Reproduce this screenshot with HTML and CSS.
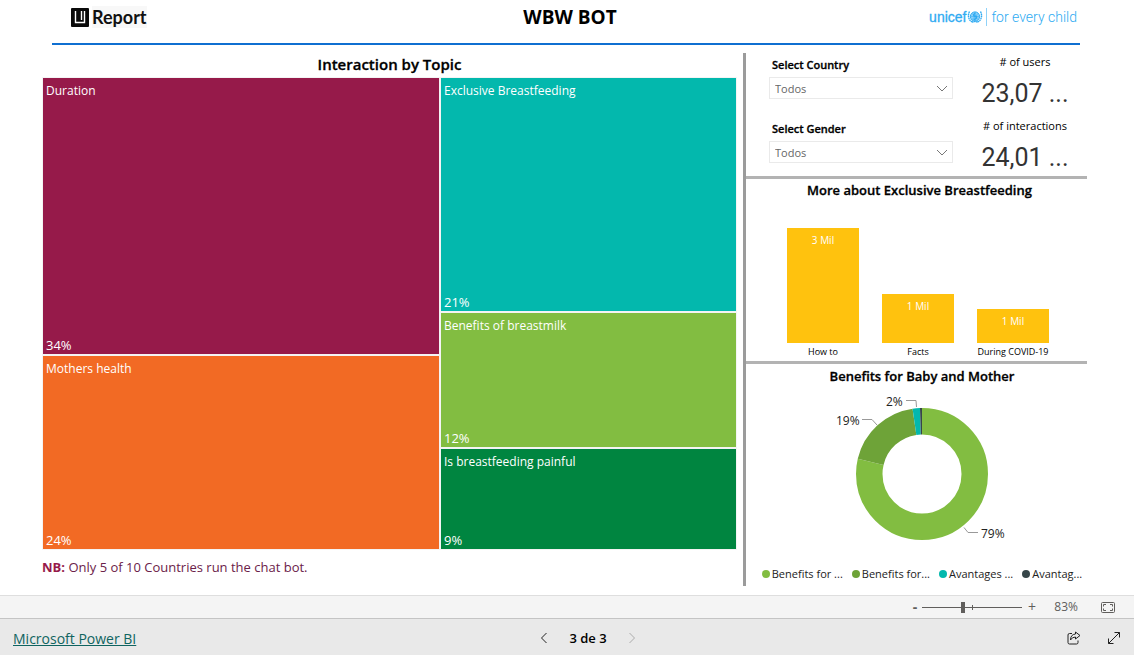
FILE: index.html
```html
<!DOCTYPE html>
<html lang="es">
<head>
<meta charset="utf-8">
<meta name="viewport" content="width=device-width, initial-scale=1">
<title>WBW BOT - Microsoft Power BI</title>
<link rel="stylesheet" href="styles.css">
</head>
<body>
<main class="report">
  <header class="header">
    <div class="logo">
      <svg class="logo-mark" viewBox="0 0 18 19" aria-hidden="true">
        <rect width="18" height="19" rx="1" fill="#0a0a0a"/>
        <path d="M4.500 3V14.500H13.500V3M10.500 3V12" fill="none" stroke="#fff" stroke-width="1.400"/>
      </svg>
      <span>Report</span>
    </div>
    <h1 class="title">WBW BOT</h1>
    <div class="unicef">
      <span class="unicef-name">unicef</span>
      <svg class="unicef-globe" viewBox="0 0 16 14" aria-hidden="true" fill="none" stroke="#2fabf2">
        <circle cx="8" cy="6.500" r="4.600" fill="#8fd2f9"/>
        <path d="M3.500 6.500H12.500M8 2V11M5 3.500L11 9.500M11 3.500L5 9.500" stroke-width=".5"/>
        <path d="M8.500 3.500Q6 4 7 6L9.500 6.500Q10 9 6.500 9.500" stroke-width="1.500"/>
        <path d="M2.500 1.500Q-.5 8 5 12M13.500 1.500Q16.500 8 11 12M5 12L8 11.500 11 12" stroke-width="1.400" stroke-dasharray="1.600 .5"/>
      </svg>
      <span class="unicef-tagline">for every child</span>
    </div>
  </header>

  <div class="columns">
    <section class="topics">
      <h2 class="heading">Interaction by Topic</h2>
      <div class="treemap">
        <div class="tree-column tree-column-left">
          <div class="tile duration"><span>Duration</span><span class="percent">34%</span></div>
          <div class="tile mothers"><span>Mothers health</span><span class="percent">24%</span></div>
        </div>
        <div class="tree-column tree-column-right">
          <div class="tile exclusive"><span>Exclusive Breastfeeding</span><span class="percent">21%</span></div>
          <div class="tile benefits"><span>Benefits of breastmilk</span><span class="percent">12%</span></div>
          <div class="tile painful"><span>Is breastfeeding painful</span><span class="percent">9%</span></div>
        </div>
      </div>
      <p class="note"><b>NB:</b> Only 5 of 10 Countries run the chat bot.</p>
    </section>

    <div class="side">
      <section class="panel overview">
        <div class="filters">
          <div class="filter">
            <label for="country">Select Country</label>
            <div class="select-box">
              <select id="country"><option>Todos</option></select>
              <svg class="select-arrow" viewBox="0 0 12 7" aria-hidden="true"><path d="M1 1L6 6L11 1"/></svg>
            </div>
          </div>
          <div class="filter">
            <label for="gender">Select Gender</label>
            <div class="select-box">
              <select id="gender"><option>Todos</option></select>
              <svg class="select-arrow" viewBox="0 0 12 7" aria-hidden="true"><path d="M1 1L6 6L11 1"/></svg>
            </div>
          </div>
        </div>
        <div class="cards">
          <div class="card"><span class="card-label"># of users</span><span class="card-value">23,07 ...</span></div>
          <div class="card"><span class="card-label"># of interactions</span><span class="card-value">24,01 ...</span></div>
        </div>
      </section>

      <section class="panel more">
        <h2 class="heading">More about Exclusive Breastfeeding</h2>
        <div class="bars">
          <div class="bar-item"><div class="bar" style="height:115px">3 Mil</div><span>How to</span></div>
          <div class="bar-item"><div class="bar" style="height:49px">1 Mil</div><span>Facts</span></div>
          <div class="bar-item"><div class="bar" style="height:34px">1 Mil</div><span>During COVID-19</span></div>
        </div>
      </section>

      <section class="panel mother">
        <h2 class="heading">Benefits for Baby and Mother</h2>
        <svg class="donut" viewBox="0 0 180 156" role="img" aria-label="Benefits for Baby and Mother">
          <g fill="none" stroke-width="26.500" transform="rotate(-90 90 85)">
            <circle cx="90" cy="85" r="52.750" pathLength="100" stroke="#82bd41" stroke-dasharray="78.700 100"/>
            <circle cx="90" cy="85" r="52.750" pathLength="100" stroke="#6ea338" stroke-dasharray="19 100" stroke-dashoffset="-78.700"/>
            <circle cx="90" cy="85" r="52.750" pathLength="100" stroke="#03b8ad" stroke-dasharray="1.800 100" stroke-dashoffset="-97.700"/>
            <circle cx="90" cy="85" r="52.750" pathLength="100" stroke="#374649" stroke-dasharray=".5 100" stroke-dashoffset="-99.500"/>
          </g>
          <g class="leaders">
            <path d="M74 11.500H84L84.500 18"/>
            <path d="M30 30.500H40L45 36"/>
            <path d="M132 138.500L136 143.500H146"/>
          </g>
          <text x="54" y="17">2%</text>
          <text x="4" y="36">19%</text>
          <text x="149" y="149">79%</text>
        </svg>
        <ul class="legend">
          <li class="key-a">Benefits for ...</li>
          <li class="key-b">Benefits for...</li>
          <li class="key-c">Avantages ...</li>
          <li class="key-d">Avantag...</li>
        </ul>
      </section>
    </div>
  </div>
</main>

<div class="zoom-bar">
  <button class="zoom-button zoom-out" type="button" aria-label="Alejar">-</button>
  <input class="zoom-slider" type="range" min="0" max="100" value="41" aria-label="Zoom">
  <button class="zoom-button" type="button" aria-label="Acercar">+</button>
  <span class="zoom-value">83%</span>
  <button class="fit-button" type="button" aria-label="Ajustar a la página">
    <svg width="14" height="11" viewBox="0 0 14 11" fill="none" stroke="#605e5c">
      <rect x=".5" y=".5" width="13" height="10" rx="1"/>
      <path d="M5 2.500H2.500V4.500M2.500 6.500V8.500H5M9 2.500H11.500V4.500M11.500 6.500V8.500H9"/>
    </svg>
  </button>
</div>

<footer class="footer">
  <div class="brand"><a href="#">Microsoft Power BI</a></div>
  <nav class="pager">
    <button type="button" aria-label="Página anterior"><svg width="8" height="12" viewBox="0 0 8 12"><path d="M6.500 1L1.500 6L6.500 11"/></svg></button>
    <span>3 de 3</span>
    <button type="button" disabled aria-label="Página siguiente"><svg width="8" height="12" viewBox="0 0 8 12"><path d="M1.500 1L6.500 6L1.500 11"/></svg></button>
  </nav>
  <div class="actions">
    <button type="button" aria-label="Compartir">
      <svg width="14" height="14" viewBox="0 0 14 14"><path d="M5 2.500H2.500Q1 2.500 1 4V11.500Q1 13 2.500 13H9.500Q11 13 11 11.500V9.500"/><path d="M8.500 1L13 4.500L8.500 8V6Q5 6 3.500 9Q3.500 3.500 8.500 3Z"/></svg>
    </button>
    <button type="button" aria-label="Pantalla completa">
      <svg width="14" height="14" viewBox="0 0 14 14"><path d="M1.500 12.500L12.500 1.500M7.500 1.500H12.500V6.500M1.500 7.500V12.500H6.500"/></svg>
    </button>
  </div>
</footer>
</body>
</html>
```
FILE: styles.css
```css
* { box-sizing: border-box; }

body {
  margin: 0;
  min-height: 100vh;
  display: flex;
  flex-direction: column;
  background: #fff;
  color: #000;
  font: 12px/16px "Open Sans", "Noto Sans", sans-serif;
}

h1, h2, p, ul { margin: 0; padding: 0; }

button {
  padding: 0;
  border: 0;
  background: none;
  color: inherit;
  font: inherit;
}

.report {
  flex: 1;
  padding: 0 47px 9px 42px;
}

.header {
  display: grid;
  grid-template-columns: 1fr auto 1fr;
  align-items: center;
  height: 45px;
  margin: 0 7px 8px 10px;
  padding: 0 3px 9px 11px;
  border-bottom: 2px solid #0f6fd1;
}

.logo {
  display: flex;
  align-items: center;
  gap: 3px;
  margin-left: 8px;
  font: 700 18px/22px Lato, sans-serif;
  color: #111;
}

.logo span { background: #f8f8f8; }
.logo-mark { width: 18px; height: 19px; }
.title { font-size: 19px; line-height: 24px; font-weight: 700; }

.unicef {
  display: flex;
  align-items: center;
  justify-content: flex-end;
  color: #2fabf2;
  font: 14px/18px "Liberation Sans", sans-serif;
}

.unicef-name { -webkit-text-stroke: 0.3px #2fabf2; }
.unicef-globe { width: 16px; height: 14px; margin: 0 3px 0 1px; }
.unicef-tagline { padding-left: 4px; border-left: 1px solid #8fd2f9; font-family: Roboto, sans-serif; font-weight: 300; }

.columns { display: flex; gap: 6px; }
.topics { flex: 695 0 0; min-width: 0; }
.heading { font-size: 13px; line-height: 18px; font-weight: 600; text-align: center; -webkit-text-stroke: 0.3px #000; }
.topics .heading { padding-bottom: 2px; font-size: 15px; line-height: 22px; }

.treemap {
  display: flex;
  gap: 2px;
  height: 473px;
  padding: 1px;
  background: #f4f4f4;
}

.tree-column { display: flex; flex-direction: column; gap: 2px; }
.tree-column-left { flex: 396; }
.tree-column-right { flex: 295; }

.tile {
  display: flex;
  flex-direction: column;
  justify-content: space-between;
  flex-basis: 0;
  padding: 4px 3px 0;
  color: #fff;
  font-size: 12px;
  line-height: 17px;
}

.percent { font-size: 13px; }
.duration { flex-grow: 277; background: #961a4a; }
.mothers { flex-grow: 192; background: #f26a24; }
.exclusive { flex-grow: 236; background: #03b8ad; }
.benefits { flex-grow: 133; background: #82bd41; }
.painful { flex-grow: 99; background: #008540; }

.note { margin-top: 8px; color: #6b2149; font-size: 13px; line-height: 18px; }
.note b { color: #961a4a; }

.side { flex: 341 0 0; min-width: 0; border-left: 3px solid #9b9b9b; }
.panel + .panel { border-top: 3px solid #b3b3b3; }

.overview {
  display: flex;
  gap: 27px;
  height: 123px;
  padding: 0 17px 0 23px;
}

.filters { flex: 1; padding-top: 4px; }
.filter { height: 64px; }
.filter label { display: block; height: 20px; padding-left: 3px; font-size: 11px; font-weight: 600; -webkit-text-stroke: 0.3px #000; }
.select-box { position: relative; }

.select-box select {
  appearance: none;
  display: block;
  width: 100%;
  height: 22px;
  padding: 2px 24px 0 5px;
  border: 1px solid #eaeaea;
  border-radius: 0;
  background: #fff;
  color: #666;
  font: 11px/16px "Open Sans", "Noto Sans", sans-serif;
}

.select-arrow {
  position: absolute;
  top: 8px;
  right: 5px;
  width: 12px;
  height: 7px;
  fill: none;
  stroke: #777;
  pointer-events: none;
}

.cards { width: 90px; }
.card { display: flex; flex-direction: column; align-items: center; height: 64px; white-space: nowrap; }
.card-label { line-height: 18px; font-size: 11px; }
.card-value { color: #333; font: 25px/46px Roboto, sans-serif; }

.more { height: 185px; padding: 2px 0 0 6px; }

.bars {
  display: flex;
  justify-content: center;
  align-items: flex-end;
  gap: 23px;
  height: 161px;
  padding-right: 3px;
}

.bar-item { display: flex; flex-direction: column; align-items: center; width: 72px; white-space: nowrap; font-size: 9px; line-height: 17px; }
.bar { width: 100%; padding-top: 4px; background: #ffc20e; color: #fff; font-size: 10px; text-align: center; }

.mother { display: flex; flex-direction: column; align-items: center; padding: 3px 0 0 11px; }
.donut { width: 180px; height: 156px; margin: 4px 0 20px; }
.donut text { font-size: 12px; fill: #222; }
.leaders { fill: none; stroke: #999; }

.legend { display: flex; gap: 9px; height: 21px; list-style: none; white-space: nowrap; }
.legend li { display: flex; align-items: center; gap: 2px; height: 18px; color: #222; font-size: 11px; }
.legend li::before { content: ""; width: 8px; height: 8px; border-radius: 50%; background: var(--key); }
.key-a { --key: #82bd41; }
.key-b { --key: #6ea338; }
.key-c { --key: #03b8ad; }
.key-d { --key: #374649; }

.zoom-bar {
  display: flex;
  align-items: center;
  justify-content: flex-end;
  height: 23px;
  padding-right: 19px;
  border-top: 1px solid #dedede;
  background: #f4f4f4;
  color: #605e5c;
}

.zoom-button { width: 20px; font-size: 14px; }
.zoom-out { width: 14px; font-weight: 700; }

.zoom-slider {
  appearance: none;
  width: 100px;
  height: 12px;
  margin: 0;
  background:
    linear-gradient(#605e5c, #605e5c) center / 100% 1px no-repeat,
    linear-gradient(#605e5c, #605e5c) center / 1px 5px no-repeat;
}

.zoom-slider::-webkit-slider-thumb { appearance: none; width: 4px; height: 11px; background: #605e5c; }
.zoom-value { width: 36px; margin-right: 23px; text-align: right; }
.fit-button { display: flex; }

.footer {
  display: flex;
  align-items: center;
  height: 37px;
  border-top: 1px solid #c4c4c4;
  background: #e9e9e9;
}

.brand { flex: 1; padding: 3px 0 0 13px; font-size: 14px; line-height: 18px; }
.brand a { color: #0f6460; text-decoration: underline; }
.pager { display: flex; align-items: center; gap: 13px; padding: 1px 0 0 29px; font-size: 13px; line-height: 18px; font-weight: 600; }
.pager button { display: flex; justify-content: center; width: 24px; }
.footer svg { fill: none; stroke: #222; }
.pager button:disabled { opacity: 0.3; }
.actions { display: flex; flex: 1; justify-content: flex-end; padding-top: 2px; }
.actions button { display: flex; justify-content: center; width: 40px; }
```
